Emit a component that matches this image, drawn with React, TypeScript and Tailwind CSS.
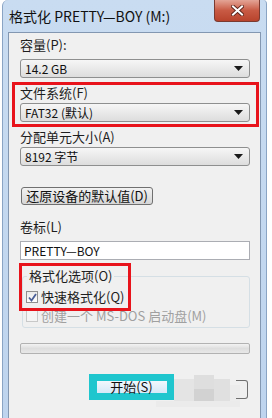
import React from 'react';

const font = { fontFamily: '"Noto Sans CJK SC", "DejaVu Sans", sans-serif' };

const Arrow = () => (
  <svg width="9" height="5" viewBox="0 0 9 5" className="shrink-0">
    <path d="M0 0 H9 L4.5 5 Z" fill="#1a1a1a" />
  </svg>
);

const Select: React.FC<{ value: string }> = ({ value }) => (
  <div className="flex h-[19px] w-[230px] items-center justify-between rounded-[3px] border border-[#8e8f8f] bg-gradient-to-b from-[#f6f6f6] to-[#dddddd] pl-[4px] pr-[6px]">
    <span className="text-[12px] leading-[14px] text-[#111]">{value}</span>
    <Arrow />
  </div>
);

const Label: React.FC<{ children: React.ReactNode; className?: string }> = ({ children, className = '' }) => (
  <div className={`h-[16px] text-[13px] leading-[16px] text-[#1e1e1e] ${className}`}>{children}</div>
);

const App: React.FC = () => {
  return (
    <div className="relative h-[418px] w-[272px] overflow-hidden bg-white" style={font}>
      <div className="ml-[2px] flex h-full w-[265px] flex-col rounded-tl-[6px] rounded-tr-[4px] border-l border-r border-[#8aa4c4] bg-gradient-to-b from-[#c9dcf1] to-[#bed4ee]">
        {/* title bar */}
        <div className="relative flex h-[32px] shrink-0 items-center pl-[6px]">
          <span className="text-[14px] leading-[16px] text-[#111]">格式化 PRETTY—BOY (M:)</span>
          <div className="absolute right-[6px] top-0 flex h-[22px] w-[46px] items-center justify-center rounded-b-[4px] border border-t-0 border-[#7a3a30] bg-gradient-to-b from-[#e3a496] via-[#c85a44] to-[#b8432c]">
            <svg width="13" height="11" viewBox="0 0 13 11">
              <path d="M2 1.5 L11 9.5 M11 1.5 L2 9.5" stroke="#5a231a" strokeWidth="3.8" strokeLinecap="square" />
              <path d="M2 1.5 L11 9.5 M11 1.5 L2 9.5" stroke="#ffffff" strokeWidth="2" strokeLinecap="square" />
            </svg>
          </div>
        </div>

        {/* content panel */}
        <div className="relative ml-[5px] w-[253px] flex-1 border-l border-t border-r border-[#8397b1] bg-[#f0f0f0] pl-[11px]">
          <Label className="mt-[4px]">容量(P):</Label>
          <div className="mt-[6px]">
            <Select value="14.2 GB" />
          </div>

          <div className="mt-[4px] -ml-[8px] w-[247px] border-[3px] border-[#e8131b] pb-[2px] pl-[5px]">
            <Label>文件系统(F)</Label>
            <div className="mt-[2px]">
              <Select value="FAT32 (默认)" />
            </div>
          </div>

          <Label className="mt-[2px]">分配单元大小(A)</Label>
          <div className="mt-[2px]">
            <Select value="8192 字节" />
          </div>

          <div className="mt-[21px] ml-[1px] flex h-[18px] w-[132px] items-center justify-center rounded-[3px] border border-[#707070] bg-gradient-to-b from-[#f2f2f2] to-[#d6d6d6]">
            <span className="text-[13px] leading-[14px] text-[#111]">还原设备的默认值(D)</span>
          </div>

          <Label className="mt-[14px]">卷标(L)</Label>
          <div className="mt-[6px] flex h-[19px] w-[230px] items-center border border-[#abadb3] bg-white pl-[3px]">
            <span className="text-[12px] leading-[14px] text-[#111]">PRETTY—BOY</span>
          </div>

          {/* group box */}
          <div className="relative mt-[16px] ml-[2px] h-[52px] w-[228px] rounded-[3px] border border-[#d5dfe5]">
            <div className="absolute -top-[9px] left-[4px] bg-[#f0f0f0] px-[2px] text-[13px] leading-[16px] text-[#1e1e1e]">格式化选项(O)</div>
            <div className="mt-[12px] ml-[3px] flex h-[16px] items-center gap-[3px]">
              <div className="flex h-[12px] w-[12px] items-center justify-center border border-[#8f8f8f] bg-gradient-to-b from-[#eaeaea] to-white">
                <svg width="9" height="9" viewBox="0 0 9 9">
                  <path d="M1 4.5 L3.5 7.5 L8 1" stroke="#4a5f97" strokeWidth="1.8" fill="none" />
                </svg>
              </div>
              <span className="text-[13px] leading-[16px] text-[#1e1e1e]">快速格式化(Q)</span>
            </div>
            <div className="mt-[3px] ml-[3px] flex h-[16px] items-center gap-[3px]">
              <div className="h-[12px] w-[12px] border border-[#c8c8c8] bg-[#f4f4f4]" />
              <span className="text-[13px] leading-[16px] text-[#a0a0a0]">创建一个 MS-DOS 启动盘(M)</span>
            </div>
          </div>

          {/* red highlight over the options */}
          <div className="pointer-events-none absolute left-[10px] top-[230px] h-[48px] w-[112px] border-[3px] border-[#e8131b]" />

          {/* progress */}
          <div className="mt-[15px] h-[11px] w-[230px] rounded-[2px] border border-[#b2b2b2] bg-gradient-to-b from-[#f3f3f3] via-[#dedede] to-[#e8e8e8]" />

          {/* buttons */}
          <div className="mt-[20px] ml-[69px] flex items-start">
            <div className="flex h-[26px] w-[85px] items-center justify-center bg-[#1fc6ce]">
              <div className="flex h-[12px] w-[70px] items-center justify-center bg-gradient-to-b from-[#f1f8fd] to-[#d5e9f8]">
                <span className="text-[13px] leading-[14px] text-[#111]">开始(S)</span>
              </div>
            </div>
            <div className="relative mt-[1px] h-[32px] w-[74px]">
              <div className="absolute left-0 top-[4px] h-[22px] w-[20px] bg-[#e4e4e4]" />
              <div className="absolute left-[20px] top-0 h-[14px] w-[20px] bg-[#dedede]" />
              <div className="absolute left-[20px] top-[14px] h-[12px] w-[20px] bg-[#d2d2d2]" />
              <div className="absolute left-[40px] top-[4px] h-[22px] w-[16px] bg-[#e0e0e0]" />
              <div className="absolute left-[56px] top-[10px] h-[16px] w-[10px] bg-[#ececec]" />
              <div className="absolute left-[-18px] top-[26px] h-[6px] w-[84px] bg-[#ebebeb]" />
              <div className="absolute left-[62px] top-[5px] h-[19px] w-[12px] rounded-r-[3px] border border-l-0 border-[#707070]" />
            </div>
          </div>
        </div>
      </div>
    </div>
  );
};

export default App;
